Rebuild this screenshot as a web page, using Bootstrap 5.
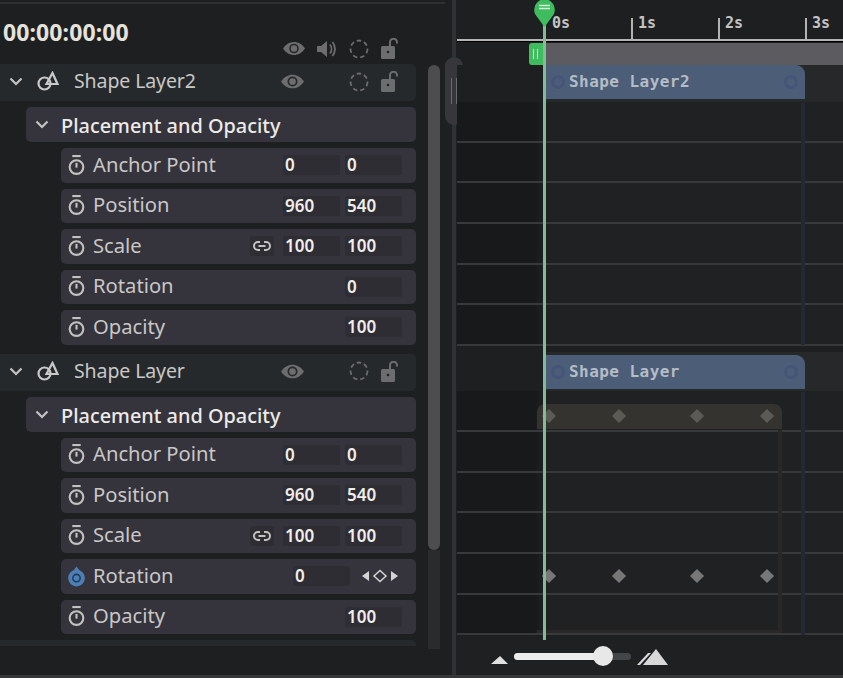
<!DOCTYPE html>
<html lang="en">
<head>
<meta charset="UTF-8">
<title>Timeline</title>
<link href="https://cdn.jsdelivr.net/npm/bootstrap@5.3.3/dist/css/bootstrap.min.css" rel="stylesheet">
<style>
html, body { height: 100%; }
body { background: #1d1f21; overflow: hidden; font-family: "Noto Sans", "Liberation Sans", sans-serif; color: #c9c7c6; }
.stage { width: 843px; height: 678px; position: relative; }
.left-pane { width: 445px; flex: none; position: relative; border-top: 2px solid #2f3031; margin-top: 2px; height: 645px; }
.head-bar { height: 60px; padding-left: 3px; position: relative; }
.timecode { font-size: 23px; font-weight: 700; color: #e6e2dc; line-height: 1; padding-top: 17px; letter-spacing: .1px; }
.head-icons { position: absolute; left: 283px; top: 34px; width: 118px; }
.row-stack { width: 416px; }
.layer-row { height: 37px; background: #26292c; border-radius: 0 5px 5px 0; color: #c8c8c6; font-size: 19.5px; position: relative; }
.layer-name { position: absolute; left: 74px; top: 2px; letter-spacing: -.1px; }
.layer-icons { position: absolute; left: 281px; top: 7px; width: 120px; }
.group-row { height: 35px; margin: 6px 0 6px 26px; background: #35343c; border-radius: 5px; font-size: 19.9px; font-weight: 500; color: #ecebe8; padding-left: 9px; }
.group-row span { margin-top: 3px; }
.prop-row { height: 34.5px; margin: 0 0 6px 61px; background: #35343c; border-radius: 5px; font-size: 20.2px; color: #c9c7c6; padding-left: 7px; position: relative; }
.prop-name { margin-left: 8px; line-height: 1; margin-top: -3px; }
.val-box { position: absolute; top: 7px; height: 20px; width: 57px; background: #2e2d33; border-radius: 2px; font-size: 17px; font-weight: 600; color: #f0eeea; line-height: 20px; padding-left: 2px; }
.val-a { left: 222px; }
.val-b { left: 284px; }
.val-c { left: 232px; }
.link-box { position: absolute; left: 189px; top: 7px; width: 24px; height: 20px; background: #2e2d33; border-radius: 2px; }
.nav-keys { position: absolute; left: 301px; top: 10px; }
.gap-strip { height: 3px; }
.end-strip { height: 6px; background: #26292c; border-radius: 0 5px 0 0; }
.scroll-thumb { position: absolute; left: 428px; top: 61px; width: 12px; height: 485px; background: #4d4d50; border-radius: 6px; }
.scroll-track { position: absolute; left: 428px; top: 546px; width: 12px; height: 99px; background: #2a2b2d; }
.split-rail { position: absolute; left: 452px; top: 0; width: 4px; height: 678px; background: #303134; }
.split-grip { position: absolute; left: 445px; top: 57px; width: 18px; height: 68px; background: #36363b; border-radius: 9px; }
.split-grip::before { content: ""; position: absolute; left: 6px; top: 21px; width: 6px; height: 26px; border-left: 1px solid #6a6a6e; border-right: 1px solid #6a6a6e; }
.time-pane { position: absolute; left: 457px; top: 0; width: 386px; height: 678px; }
.ruler { height: 39px; position: relative; font-family: "DejaVu Sans Mono", monospace; font-weight: 700; font-size: 15px; color: #c4c4c4; }
.ruler-mark { position: absolute; top: 18px; height: 21px; border-left: 2px solid #b3b3b3; padding-left: 5px; line-height: 10px; }
.ruler-line { height: 3px; background: #b5b5b5; border-bottom: 1px solid #000; }
.work-bar { height: 22px; margin-top: 1px; background: linear-gradient(90deg, transparent 88px, #5c5b60 88px); position: relative; }
.work-grip { position: absolute; left: 72px; top: 0; width: 16px; height: 22px; background: #3fbd5e; border-radius: 3px 0 0 3px; }
.work-grip::before { content: ""; position: absolute; left: 4px; top: 6px; width: 5px; height: 10px; border-left: 1px solid #d7f0dc; border-right: 1px solid #d7f0dc; }
.clip-row { background: linear-gradient(90deg, #1d1f21 88px, #26282a 88px); position: relative; }
.clip { position: absolute; left: 88px; width: 260px; background: #4c5d78; border-radius: 0 9px 0 0; color: #b4bcc6; font-family: "DejaVu Sans Mono", monospace; font-weight: 700; font-size: 16px; letter-spacing: .45px; padding-left: 24px; }
.clip-knob { position: absolute; top: 10px; width: 14px; height: 14px; border: 3px solid #45557a; border-radius: 50%; }
.track-row { height: 40.7px; border-bottom: 2px solid #38393b; background: linear-gradient(90deg, #17191a 78px, #1f2123 88px); position: relative; }
.key-grid { display: grid; grid-template-columns: 70px 78px 70px 10px; margin-left: 87px; }
.key-dot { width: 10px; height: 10px; background: #777777; transform: rotate(45deg); }
.key-row { padding-top: 13px; }
.key-bar { height: 25px; margin-left: 80px; width: 245px; background: #35332f; border-radius: 8px 8px 0 0; padding-top: 7px; }
.key-bar .key-grid { margin-left: 7px; }
.key-bar .key-dot { background: #5c5a55; }
.guide-blue { position: absolute; left: 344px; width: 4px; background: #25282e; }
.guide-brown { position: absolute; left: 321px; top: 430px; width: 4px; height: 203px; background: #2a2826; }
.guide-floor { position: absolute; left: 80px; top: 630px; width: 245px; height: 3px; background: #2a2826; }
.play-line { position: absolute; left: 86px; top: 14px; width: 3px; height: 626px; background: #83bb95; }
.play-pin { position: absolute; left: 76px; top: 0; }
.zoom-bar { position: absolute; left: 0; top: 640px; width: 386px; height: 35px; background: #1f2022; }
.zoom-foot { position: absolute; left: 0; top: 675px; width: 843px; height: 3px; background: #37383a; }
.zoom-track { position: absolute; left: 57px; top: 13px; width: 117px; height: 7px; background: #444549; border-radius: 4px; }
.zoom-fill { height: 7px; width: 89px; background: #ececec; border-radius: 4px; }
.zoom-knob { position: absolute; left: 136px; top: 6px; width: 20px; height: 20px; background: #e8e8e8; border-radius: 50%; }
.zoom-small { position: absolute; left: 34px; top: 15px; }
.zoom-big { position: absolute; left: 180px; top: 8px; }
</style>
</head>
<body>
<svg width="0" height="0" class="position-absolute">
  <symbol id="eye" viewBox="0 0 22 14"><path d="M0 7C3 2.500 7 .5 11 .5S19 2.500 22 7c-3 4.500-7 6.500-11 6.500S3 11.500 0 7Z" fill="#6d6d6f"/><circle cx="11" cy="7" r="4" fill="none" stroke="#26282a" stroke-width="1.600"/></symbol>
  <symbol id="speaker" viewBox="0 0 20 18"><path d="M0 6h4l6-5v16l-6-5H0Z" fill="#6d6d6f"/><path d="M13 4.500c2 2.600 2 6.400 0 9M15.500 2c3.300 4 3.300 10 0 14" fill="none" stroke="#6d6d6f" stroke-width="1.800"/></symbol>
  <symbol id="dashring" viewBox="0 0 20 20"><circle cx="10" cy="10" r="8.500" fill="none" stroke="#6d6d6f" stroke-width="1.800" stroke-dasharray="4.500 3"/></symbol>
  <symbol id="lock" viewBox="0 0 20 21"><rect x="0" y="8" width="14" height="13" rx="1.500" fill="#6d6d6f"/><circle cx="7" cy="14" r="1.300" fill="#202224"/><path d="M9 8V4.500a3.500 3.500 0 0 1 7-.5v1.500" fill="none" stroke="#6d6d6f" stroke-width="2"/></symbol>
  <symbol id="watch" viewBox="0 0 16 20"><rect x="4" y="0" width="8" height="2" fill="#c4c2bf"/><circle cx="8" cy="11.500" r="6.500" fill="none" stroke="#c4c2bf" stroke-width="2"/><rect x="7" y="7.500" width="2" height="4.500" fill="#c4c2bf"/></symbol>
  <symbol id="watch-on" viewBox="0 0 16 20"><circle cx="8" cy="11.500" r="8" fill="#4d7fb5"/><path d="M5 4.500 8 .5l3 4Z" fill="#4d7fb5"/><circle cx="8" cy="11.500" r="3.500" fill="none" stroke="#1f3a5a" stroke-width="1.500"/></symbol>
  <symbol id="chev" viewBox="0 0 14 9"><path d="M1.500 1.500 7 7l5.500-5.500" fill="none" stroke="#c4c4c4" stroke-width="2.200"/></symbol>
  <symbol id="shape" viewBox="0 0 24 20"><circle cx="8.500" cy="12.500" r="6" fill="none" stroke="#c9c9c9" stroke-width="2.200"/><path d="M16.500 2 21.500 13H10.500Z" fill="none" stroke="#c9c9c9" stroke-width="2.200"/></symbol>
  <symbol id="chain" viewBox="0 0 18 10"><path d="M7 1H5a4 4 0 0 0 0 8h2M11 1h2a4 4 0 0 1 0 8h-2M5.500 5h7" fill="none" stroke="#c4c2bf" stroke-width="2"/></symbol>
</svg>

<div class="stage d-flex">
  <div class="left-pane">
    <div class="head-bar">
      <div class="timecode">00:00:00:00</div>
      <div class="head-icons d-flex justify-content-between align-items-center">
        <svg width="22" height="15"><use href="#eye"/></svg>
        <svg width="20" height="18"><use href="#speaker"/></svg>
        <svg width="20" height="20"><use href="#dashring"/></svg>
        <svg width="20" height="21"><use href="#lock"/></svg>
      </div>
    </div>
    <div class="row-stack">
      <div class="layer-row">
        <svg class="position-absolute" style="left:9px;top:13px" width="14" height="9"><use href="#chev"/></svg>
        <svg class="position-absolute" style="left:36px;top:7px" width="24" height="20"><use href="#shape"/></svg>
        <span class="layer-name">Shape Layer2</span>
        <div class="layer-icons d-flex justify-content-between align-items-center">
          <svg width="23" height="15"><use href="#eye"/></svg>
          <span style="width:20px"></span>
          <svg width="20" height="20"><use href="#dashring"/></svg>
          <svg width="20" height="21"><use href="#lock"/></svg>
        </div>
      </div>
      <div class="group-row d-flex align-items-center gap-2"><svg width="14" height="9"><use href="#chev"/></svg><span class="ms-1">Placement and Opacity</span></div>
      <div class="prop-row d-flex align-items-center"><svg width="17" height="21"><use href="#watch"/></svg><span class="prop-name">Anchor Point</span><span class="val-box val-a">0</span><span class="val-box val-b">0</span></div>
      <div class="prop-row d-flex align-items-center"><svg width="17" height="21"><use href="#watch"/></svg><span class="prop-name">Position</span><span class="val-box val-a">960</span><span class="val-box val-b">540</span></div>
      <div class="prop-row d-flex align-items-center"><svg width="17" height="21"><use href="#watch"/></svg><span class="prop-name">Scale</span><span class="link-box d-flex align-items-center justify-content-center"><svg width="18" height="10"><use href="#chain"/></svg></span><span class="val-box val-a">100</span><span class="val-box val-b">100</span></div>
      <div class="prop-row d-flex align-items-center"><svg width="17" height="21"><use href="#watch"/></svg><span class="prop-name">Rotation</span><span class="val-box val-b">0</span></div>
      <div class="prop-row d-flex align-items-center"><svg width="17" height="21"><use href="#watch"/></svg><span class="prop-name">Opacity</span><span class="val-box val-b">100</span></div>
      <div class="gap-strip"></div>
      <div class="layer-row">
        <svg class="position-absolute" style="left:9px;top:13px" width="14" height="9"><use href="#chev"/></svg>
        <svg class="position-absolute" style="left:36px;top:7px" width="24" height="20"><use href="#shape"/></svg>
        <span class="layer-name">Shape Layer</span>
        <div class="layer-icons d-flex justify-content-between align-items-center">
          <svg width="23" height="15"><use href="#eye"/></svg>
          <span style="width:20px"></span>
          <svg width="20" height="20"><use href="#dashring"/></svg>
          <svg width="20" height="21"><use href="#lock"/></svg>
        </div>
      </div>
      <div class="group-row d-flex align-items-center gap-2"><svg width="14" height="9"><use href="#chev"/></svg><span class="ms-1">Placement and Opacity</span></div>
      <div class="prop-row d-flex align-items-center"><svg width="17" height="21"><use href="#watch"/></svg><span class="prop-name">Anchor Point</span><span class="val-box val-a">0</span><span class="val-box val-b">0</span></div>
      <div class="prop-row d-flex align-items-center"><svg width="17" height="21"><use href="#watch"/></svg><span class="prop-name">Position</span><span class="val-box val-a">960</span><span class="val-box val-b">540</span></div>
      <div class="prop-row d-flex align-items-center"><svg width="17" height="21"><use href="#watch"/></svg><span class="prop-name">Scale</span><span class="link-box d-flex align-items-center justify-content-center"><svg width="18" height="10"><use href="#chain"/></svg></span><span class="val-box val-a">100</span><span class="val-box val-b">100</span></div>
      <div class="prop-row d-flex align-items-center"><svg width="17" height="21"><use href="#watch-on"/></svg><span class="prop-name">Rotation</span><span class="val-box val-c">0</span>
        <svg class="nav-keys" width="36" height="14" viewBox="0 0 36 14"><path d="M0 7l7-5v10ZM36 7l-7-5v10Z" fill="#d6d4d0"/><path d="M18 1.500 24 7l-6 5.500L12 7Z" fill="none" stroke="#d6d4d0" stroke-width="1.500"/></svg>
      </div>
      <div class="prop-row d-flex align-items-center"><svg width="17" height="21"><use href="#watch"/></svg><span class="prop-name">Opacity</span><span class="val-box val-b">100</span></div>
      <div class="end-strip"></div>
    </div>
    <div class="scroll-thumb"></div>
    <div class="scroll-track"></div>
  </div>

  <div class="split-rail"></div>
  <div class="split-grip"></div>

  <div class="time-pane">
    <div class="ruler">
      <span class="ruler-mark" style="left:88px;border-color:transparent">0s</span>
      <span class="ruler-mark" style="left:174px">1s</span>
      <span class="ruler-mark" style="left:261px">2s</span>
      <span class="ruler-mark" style="left:348px">3s</span>
    </div>
    <div class="ruler-line"></div>
    <div class="work-bar"><div class="work-grip"></div></div>

    <div class="clip-row" style="height:37px"><div class="clip" style="top:0;height:34px;line-height:34px">Shape Layer2<span class="clip-knob" style="left:6px"></span><span class="clip-knob" style="left:239px"></span></div></div>
    <div class="track-row"></div>
    <div class="track-row"></div>
    <div class="track-row"></div>
    <div class="track-row"></div>
    <div class="track-row"></div>
    <div class="track-row"></div>
    <div style="height:6px"></div>
    <div class="clip-row" style="height:39px"><div class="clip" style="top:3px;height:34px;line-height:34px">Shape Layer<span class="clip-knob" style="left:6px"></span><span class="clip-knob" style="left:239px"></span></div></div>
    <div class="track-row key-row"><div class="key-bar"><div class="key-grid"><i class="key-dot"></i><i class="key-dot"></i><i class="key-dot"></i><i class="key-dot"></i></div></div></div>
    <div class="track-row"></div>
    <div class="track-row"></div>
    <div class="track-row"></div>
    <div class="track-row"><div class="key-grid" style="padding-top:17px"><i class="key-dot"></i><i class="key-dot"></i><i class="key-dot"></i><i class="key-dot"></i></div></div>
    <div class="track-row"></div>

    <div class="guide-blue" style="top:103px;height:242px"></div>
    <div class="guide-blue" style="top:392px;height:243px"></div>
    <div class="guide-brown"></div>
    <div class="guide-floor"></div>

    <div class="play-line"></div>
    <svg class="play-pin" width="23" height="28" viewBox="0 0 23 28"><path d="M11.500 27 2 14A11 11 0 0 1 11.500 -1 11 11 0 0 1 21 14Z" fill="#3fbd5e"/><path d="M6 5.500h11M6 8.500h11" stroke="#d7f0dc" stroke-width="1.500"/></svg>

    <div class="zoom-bar">
      <svg class="zoom-small" width="18" height="10" viewBox="0 0 18 10"><path d="M0 9 9 1l8 8Z" fill="#e0e0e0"/></svg>
      <div class="zoom-track"><div class="zoom-fill"></div></div>
      <div class="zoom-knob"></div>
      <svg class="zoom-big" width="32" height="18" viewBox="0 0 32 18"><path d="M0 17 11 5h3L3 17ZM6 17 19 1l12 16Z" fill="#d8d8d8"/></svg>
    </div>
  </div>
  <div class="zoom-foot"></div>
</div>
</body>
</html>
